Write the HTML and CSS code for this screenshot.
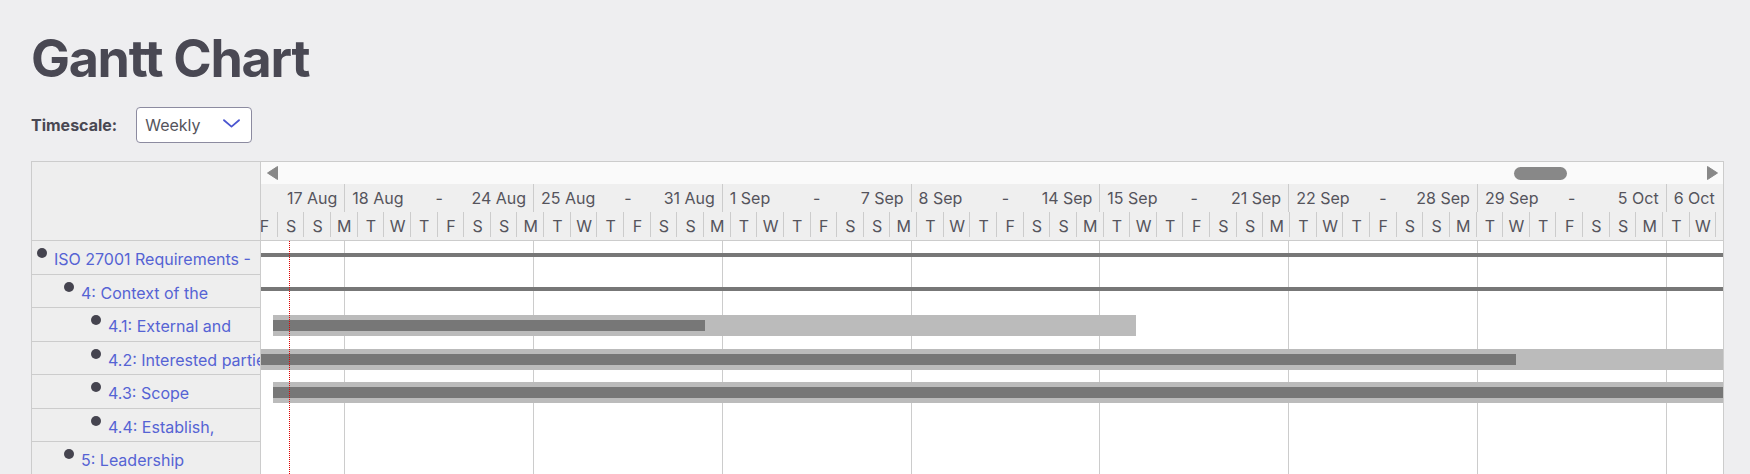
FILE: index.html
```html
<!DOCTYPE html>
<html lang="en">
<head>
<meta charset="utf-8">
<title>Gantt Chart</title>
<link rel="stylesheet" href="styles.css">
</head>
<body>
<main class="page">
  <h1 class="title">Gantt Chart</h1>
  <div class="controls">
    <label class="ctl-label">Timescale:</label>
    <div class="select">
      <span>Weekly</span>
      <svg class="chev" width="17" height="9" viewBox="0 0 17 9"><path d="M1 1.2 L8.5 7.6 L16 1.2" fill="none" stroke="#4a55d0" stroke-width="1.8" stroke-linecap="round" stroke-linejoin="round"/></svg>
    </div>
  </div>

  <div class="gantt">
    <div class="grid">
      <div class="grid-head"></div>
      <div class="tree">
        <div class="tree-row lvl0"><span class="dot"></span><a class="task">ISO 27001 Requirements - Clauses</a></div>
        <div class="tree-row lvl1"><span class="dot"></span><a class="task">4: Context of the organization</a></div>
        <div class="tree-row lvl2"><span class="dot"></span><a class="task">4.1: External and internal issues</a></div>
        <div class="tree-row lvl2"><span class="dot"></span><a class="task nowrap">4.2: Interested parties</a></div>
        <div class="tree-row lvl2"><span class="dot"></span><a class="task">4.3: Scope</a></div>
        <div class="tree-row lvl2"><span class="dot"></span><a class="task">4.4: Establish, implement and maintain</a></div>
        <div class="tree-row lvl1"><span class="dot"></span><a class="task">5: Leadership</a></div>
      </div>
    </div>

    <div class="timeline">
      <div class="scrollbar">
        <svg class="arrow" width="11" height="14" viewBox="0 0 11 14"><polygon points="10.5,0.5 10.5,13.5 0.5,7" fill="#888" stroke="#888" stroke-linejoin="round"/></svg>
        <div class="track"><span class="thumb"></span></div>
        <svg class="arrow" width="11" height="14" viewBox="0 0 11 14"><polygon points="0.5,0.5 10.5,7 0.5,13.5" fill="#888" stroke="#888" stroke-linejoin="round"/></svg>
      </div>
      <div class="weeks">
        <div class="week"><span>11 Aug</span><span>-</span><span>17 Aug</span></div>
        <div class="week"><span>18 Aug</span><span>-</span><span>24 Aug</span></div>
        <div class="week"><span>25 Aug</span><span>-</span><span>31 Aug</span></div>
        <div class="week"><span>1 Sep</span><span>-</span><span>7 Sep</span></div>
        <div class="week"><span>8 Sep</span><span>-</span><span>14 Sep</span></div>
        <div class="week"><span>15 Sep</span><span>-</span><span>21 Sep</span></div>
        <div class="week"><span>22 Sep</span><span>-</span><span>28 Sep</span></div>
        <div class="week"><span>29 Sep</span><span>-</span><span>5 Oct</span></div>
        <div class="week"><span>6 Oct</span><span>-</span><span>12 Oct</span></div>
      </div>
      <div class="days">
        <span>F</span><span>S</span><span>S</span><span>M</span><span>T</span><span>W</span><span>T</span>
        <span>F</span><span>S</span><span>S</span><span>M</span><span>T</span><span>W</span><span>T</span>
        <span>F</span><span>S</span><span>S</span><span>M</span><span>T</span><span>W</span><span>T</span>
        <span>F</span><span>S</span><span>S</span><span>M</span><span>T</span><span>W</span><span>T</span>
        <span>F</span><span>S</span><span>S</span><span>M</span><span>T</span><span>W</span><span>T</span>
        <span>F</span><span>S</span><span>S</span><span>M</span><span>T</span><span>W</span><span>T</span>
        <span>F</span><span>S</span><span>S</span><span>M</span><span>T</span><span>W</span><span>T</span>
        <span>F</span><span>S</span><span>S</span><span>M</span><span>T</span><span>W</span>
      </div>
      <div class="tl-body">
        <div class="week-lines">
          <span></span><span></span><span></span><span></span><span></span><span></span><span></span><span></span><span></span>
        </div>
        <div class="tl-row"><div class="summary"></div></div>
        <div class="tl-row"><div class="summary"></div></div>
        <div class="tl-row"><div class="bar" style="left:12px;width:863px"><div class="progress" style="width:432px"></div></div></div>
        <div class="tl-row"><div class="bar" style="left:-30px;width:1600px"><div class="progress" style="width:1285px"></div></div></div>
        <div class="tl-row"><div class="bar" style="left:12px;width:1600px"><div class="progress" style="width:100%"></div></div></div>
        <div class="tl-row"></div>
        <div class="tl-row"></div>
        <div class="today"></div>
      </div>
    </div>
  </div>
</main>
</body>
</html>
```

FILE: styles.css
```css
html, body {
  margin: 0;
  height: 100%;
  overflow: hidden;
}

body {
  background: #eeeef0;
  font-family: Inter, "Noto Sans", "Liberation Sans", sans-serif;
  color: #494853;
}

.page {
  padding: 27px 0 0 31px;
}

.title {
  margin: 0;
  font-size: 52px;
  line-height: 63px;
  font-weight: 700;
  color: #494853;
  letter-spacing: -1.3px;
}

.controls {
  display: flex;
  align-items: center;
  margin-top: 17px;
  height: 36px;
}

.ctl-label {
  font-size: 16px;
  font-weight: 700;
  color: #494853;
  margin-right: 19px;
}

.select {
  width: 116px;
  height: 36px;
  box-sizing: border-box;
  border: 1px solid #8c8ba0;
  border-radius: 4px;
  background: #fff;
  display: flex;
  align-items: center;
  justify-content: space-between;
  padding: 0 11px 0 8px;
  font-size: 16px;
  color: #55545c;
}

.chev {
  display: block;
  margin-top: -3px;
}

/* ---------- gantt ---------- */
.gantt {
  margin-top: 18px;
  display: flex;
  width: 1693px;
  box-sizing: border-box;
  border: 1px solid #cccccc;
  border-bottom: none;
}

.grid {
  flex: none;
  width: 229px;
  box-sizing: border-box;
  border-right: 1px solid #cccccc;
  background: #eeeeee;
  overflow: hidden;
}

.grid-head {
  height: 79px;
  box-sizing: border-box;
  border-bottom: 1px solid #cccccc;
}

.tree-row {
  height: 33.5px;
  box-sizing: border-box;
  border-bottom: 1px solid #cccccc;
  display: flex;
  align-items: flex-start;
  padding-top: 7px;
  padding-left: 5px;
}

.tree-row.lvl1 { padding-left: 32px; }
.tree-row.lvl2 { padding-left: 59px; }

.dot {
  flex: none;
  width: 10px;
  height: 10px;
  border-radius: 50%;
  background: #45444f;
  margin-right: 7px;
}

.task {
  flex: 1;
  min-width: 0;
  font-size: 16px;
  line-height: 20px;
  max-height: 20px;
  margin-top: 1px;
  color: #5563d4;
  overflow: hidden;
}

.task.nowrap {
  white-space: nowrap;
  overflow: visible;
}

.timeline {
  flex: none;
  width: 1462px;
  overflow: hidden;
  background: #ffffff;
}

.scrollbar {
  height: 22px;
  background: #fafafa;
  display: flex;
  align-items: center;
  padding: 0 5px 0 6px;
}

.arrow {
  flex: none;
  display: block;
}

.track {
  flex: 1;
  display: flex;
  align-items: center;
}

.thumb {
  width: 53px;
  height: 13px;
  border-radius: 7px;
  background: #888888;
  margin-left: 1236px;
}

.weeks {
  display: flex;
  height: 28px;
  margin-left: -104.47px;
  background: #efefef;
  font-size: 16px;
  color: #55545c;
}

.week {
  flex: none;
  width: 188.77px;
  box-sizing: border-box;
  border-right: 1px solid #cccccc;
  display: grid;
  grid-template-columns: 1fr auto 1fr;
  align-items: center;
  padding: 0 7px;
  white-space: nowrap;
}

.week span:last-child {
  text-align: right;
}

.days {
  display: flex;
  height: 29px;
  box-sizing: border-box;
  border-bottom: 1px solid #cccccc;
  margin-left: -9.95px;
  background: #efefef;
  font-size: 16px;
  color: #55545c;
}

.days span {
  flex: none;
  width: 26.648px;
  height: 28px;
  line-height: 28px;
  text-align: center;
  background: linear-gradient(#cccccc, #cccccc) right top / 1px 25px no-repeat;
}

.tl-body {
  position: relative;
}

.week-lines {
  position: absolute;
  top: 0;
  bottom: 0;
  left: -104.47px;
  display: flex;
}

.week-lines span {
  flex: none;
  width: 188.77px;
  box-sizing: border-box;
  border-right: 1px solid #cccccc;
}

.tl-row {
  position: relative;
  height: 33.5px;
}

.summary {
  position: absolute;
  top: 12px;
  left: 0;
  right: 0;
  height: 4px;
  background: #777777;
}

.bar {
  position: absolute;
  top: 7px;
  height: 21px;
  background: #bbbbbb;
}

.progress {
  height: 11px;
  margin-top: 5px;
  background: #777777;
}

.today {
  position: absolute;
  top: 0;
  bottom: 0;
  left: 28px;
  width: 0;
  border-left: 1px dotted #dd0000;
}
```
